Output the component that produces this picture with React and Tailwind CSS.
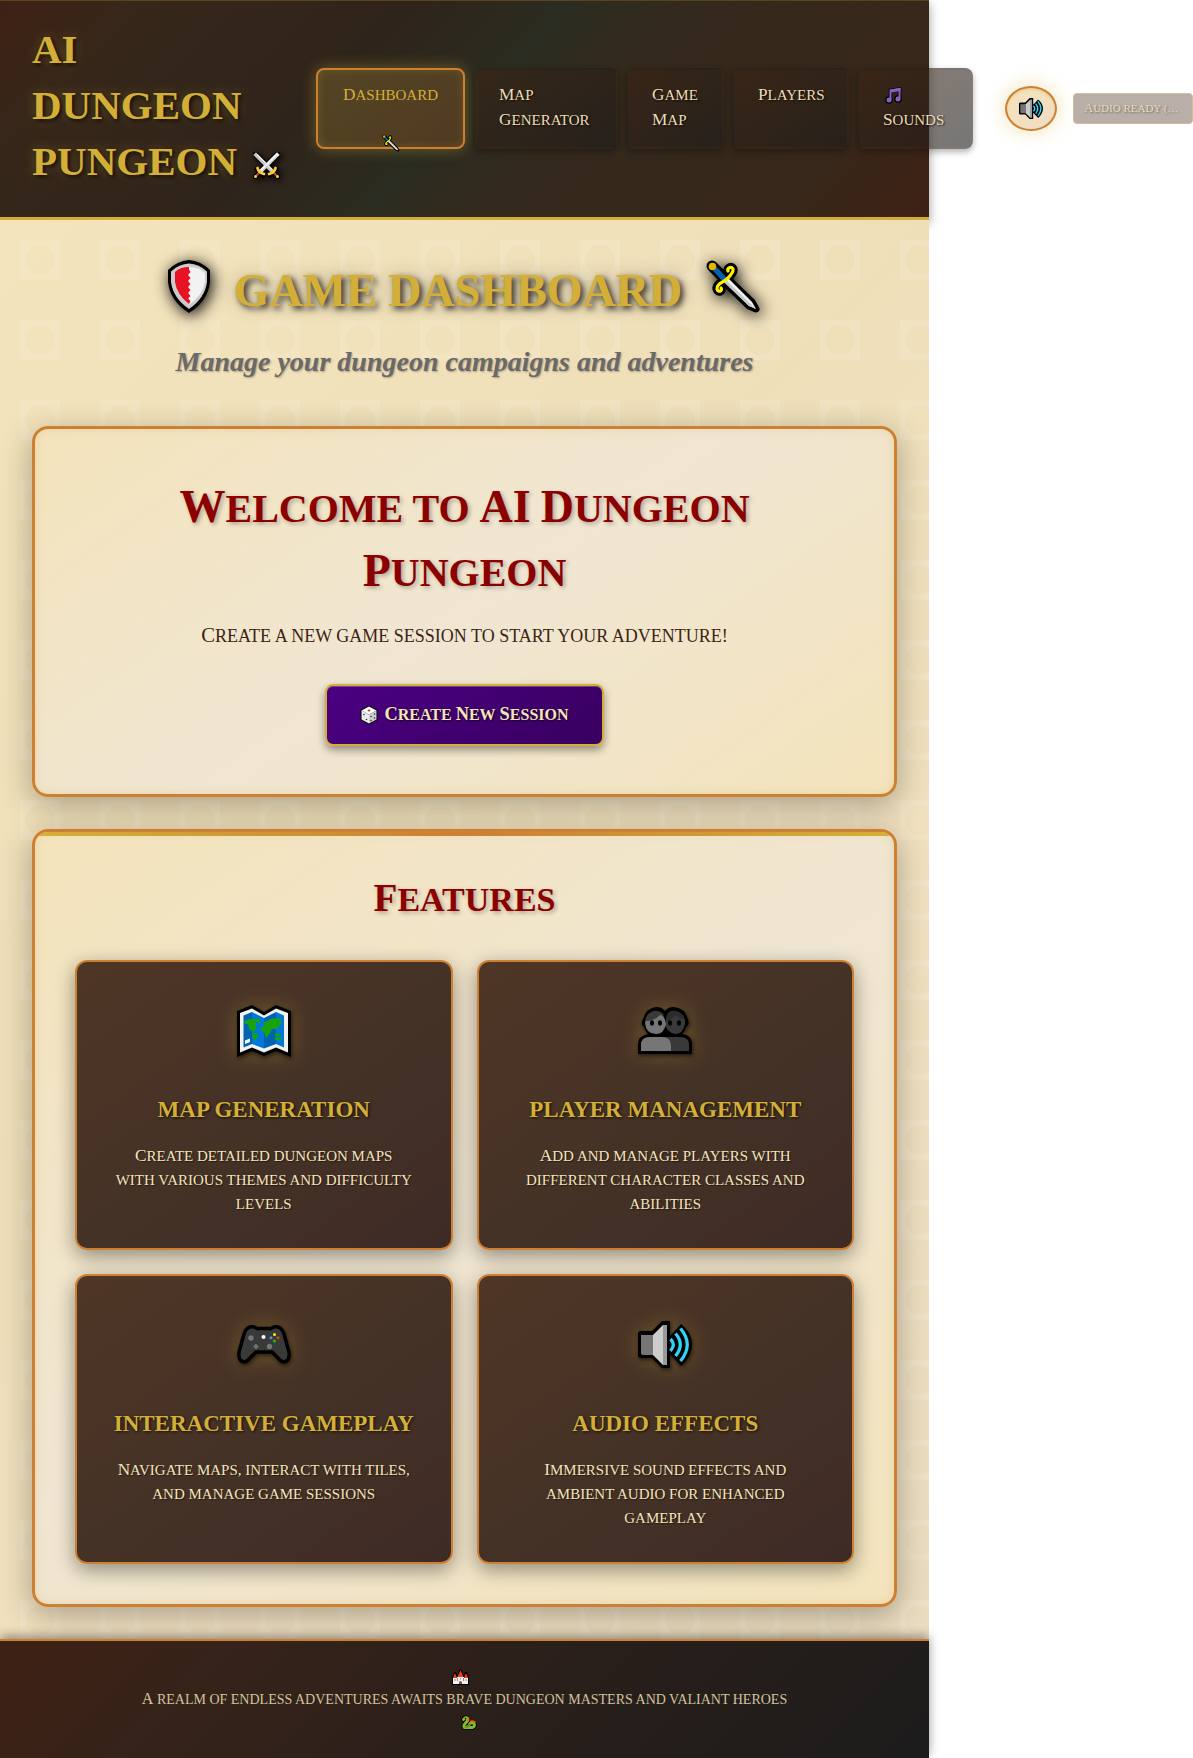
import React from "react";

/* Engraved capitals: capitalised words open with a slightly larger letter. */
function Caps({ children }) {
  const words = children.split(" ");
  return words.map((word, i) => {
    const gap = i < words.length - 1 ? " " : "";
    if (/^[A-Z]+$/.test(word)) {
      return (
        <React.Fragment key={i}>
          <span className="text-[1.15em] leading-none">{word}</span>
          {gap}
        </React.Fragment>
      );
    }
    if (/^[A-Z]/.test(word)) {
      return (
        <React.Fragment key={i}>
          <span className="inline-block leading-none first-letter:text-[1.15em]">{word}</span>
          {gap}
        </React.Fragment>
      );
    }
    return word + gap;
  });
}

function SwordsIcon({ className }) {
  return (
    <svg viewBox="0 0 27 27" className={className} aria-hidden="true">
      <g strokeLinecap="square">
        <path d="M2 2 L20 20 M25 2 L7 20" stroke="#000" strokeWidth="6" />
        <path d="M4 17 L10 23 M23 17 L17 23" stroke="#000" strokeWidth="4.5" />
        <path d="M7 20 L2 25 M20 20 L25 25" stroke="#000" strokeWidth="4.5" />
        <path d="M3 3 L19 19" stroke="#c4c4c4" strokeWidth="3.8" />
        <path d="M24 3 L8 19" stroke="#efefef" strokeWidth="3.8" />
        <path d="M24 4.500 L9.500 19" stroke="#b4b4b4" strokeWidth="1" />
        <path d="M4.500 3 L19 17.500" stroke="#ececec" strokeWidth="1.2" />
        <path d="M7 20 L3 24 M20 20 L24 24" stroke="#8e562e" strokeWidth="2.4" />
      </g>
      <path d="M4.500 16 Q5.500 20.500 11 22 M22.500 16 Q21.500 20.500 16 22" fill="none" stroke="#ffc83d" strokeWidth="2.8" strokeLinecap="round" />
      <circle cx="2.500" cy="24.500" r="1.500" fill="#ffc83d" />
      <circle cx="24.500" cy="24.500" r="1.500" fill="#ffc83d" />
    </svg>
  );
}

function DaggerIcon({ className }) {
  const guard = "M22 11 C21 8 25 6 27 9 C28 12 24 16 21 19 C18 22 10 24 11 29 C12 33 17 31 15 28";
  return (
    <svg viewBox="0 0 55 53" className={className} aria-hidden="true">
      <g fill="none" stroke="#000" strokeLinecap="round" strokeLinejoin="round">
        <path d="M6 6 L20 20" strokeWidth="11" />
        <path d={guard} strokeWidth="9" />
        <path d="M19 23 L22 19 L46 42 L50 49 L43 46 Z" fill="#000" strokeWidth="7" />
      </g>
      <path d="M9 9 L19 20" stroke="#0063b1" strokeWidth="5.5" />
      <circle cx="6.500" cy="6.500" r="3.800" fill="#dfb700" />
      <path d="M18 22 L22 18 L46 42 L50 49 L43 46 Z" fill="#f2f2f2" />
      <path d="M18 22 L20 20 L50 49 L43 46 Z" fill="#c8c8c8" />
      <path d={guard} fill="none" stroke="#fff100" strokeWidth="3.2" strokeLinecap="round" />
    </svg>
  );
}

function ShieldIcon({ className }) {
  return (
    <svg viewBox="0 0 42 53" className={className} aria-hidden="true">
      <path d="M21 0 Q33 1 42 10 V22 Q40 41 21 53 Q2 41 0 22 V10 Q9 1 21 0 Z" fill="#000" />
      <path d="M21 3.500 Q31 4 39 11.500 V22 Q37 38 21 49 Q5 38 3 22 V11.500 Q11 4 21 3.500 Z" fill="#cccccc" />
      <path d="M20 7 Q30 6 37 13 V22 Q35 35 21 45 Z" fill="#f2f2f2" />
      <path d="M21 7 Q12 7 7 12 V22 Q9 35 21 44 L22.500 41 L20 38.500 L22.500 36 L20 33 L22.500 30 L20 27 L22.500 24 L20 21 L22.500 18 L20 15 L22.500 12 L21 9.500 Z" fill="#e81224" />
    </svg>
  );
}

function MusicIcon({ className }) {
  const body = "M5.500 14 V4.500 L14.500 3 V12.500";
  return (
    <svg viewBox="0 0 17 18" className={className} aria-hidden="true">
      <g stroke="#000" strokeWidth="3.600" fill="#000">
        <path d={body} fill="none" />
        <circle cx="4" cy="14" r="2" />
        <circle cx="13" cy="13" r="2" />
      </g>
      <path d={body} fill="none" stroke="#8661c5" strokeWidth="2" />
      <path d="M5 3.500 L15.500 2 V5 L5 6.500 Z" fill="#8661c5" />
      <circle cx="4" cy="14" r="2.500" fill="#8661c5" />
      <circle cx="13" cy="13" r="2.500" fill="#8661c5" />
    </svg>
  );
}

function SpeakerIcon({ className }) {
  return (
    <svg viewBox="0 0 54 47" className={className} aria-hidden="true">
      <path d="M3 10 H14 L24 0 H32 V15 L43 3 Q54 12 54 23.500 Q54 35 43 45 L32 33 V47 H24 L14 37 H3 Q0 37 0 34 V13 Q0 10 3 10 Z" fill="#000" />
      <path d="M3 14 H15 V34 H5 Q3 34 3 32 Z" fill="#767676" />
      <path d="M15 14 L25 4 H29 V44 H25 L15 34 Z" fill="#cccccc" />
      <path d="M25 4 H29 V44 H25 Z" fill="#999999" />
      <g fill="none" stroke="#31d2f7" strokeWidth="3.2">
        <path d="M32.500 18 Q38 23.500 32.500 30" />
        <path d="M37.500 12.500 Q47 23.500 37.500 35" />
        <path d="M42.500 7.500 Q56 23.500 42.500 40" />
      </g>
    </svg>
  );
}

function DiceIcon({ className }) {
  return (
    <svg viewBox="0 0 18 20" className={className} aria-hidden="true">
      <path d="M9 0.500 L17.500 5 V15 L9 19.500 L0.500 15 V5 Z" fill="#000" />
      <path d="M9 1.500 L16.500 5.500 L9 9.500 L1.500 5.500 Z" fill="#fff" />
      <path d="M1.500 5.500 L9 9.500 V18.500 L1.500 14.500 Z" fill="#eaeaea" />
      <path d="M16.500 5.500 L9 9.500 V18.500 L16.500 14.500 Z" fill="#d0d0d0" />
      <ellipse cx="9" cy="5.500" rx="1.400" ry="0.900" fill="#d13438" />
      <g fill="#333">
        <circle cx="4" cy="9.500" r="0.800" />
        <circle cx="6.500" cy="14.500" r="0.800" />
        <circle cx="11" cy="15.500" r="0.800" />
        <circle cx="11" cy="11.500" r="0.800" />
        <circle cx="14.500" cy="13" r="0.800" />
        <circle cx="14.500" cy="9" r="0.800" />
      </g>
    </svg>
  );
}

function MapIcon({ className }) {
  return (
    <svg viewBox="0 0 54 52" className={className} aria-hidden="true">
      <path d="M0 6 L15 0 L27 7 L39 0 L54 6 V52 L39 46 L27 51 L15 46 L0 52 Z" fill="#000" />
      <path d="M3 8 L15 3.500 L27 10.500 L39 3.500 L51 8 V47.500 L39 42.500 L27 47.500 L15 42.500 L3 47.500 Z" fill="#f2f2f2" />
      <path d="M6.500 10.500 L15 7 V39 L6.500 42.500 Z M27 13 L39 7 V39 L27 43.500 Z" fill="#0063b1" />
      <path d="M15 7 L27 13 V43.500 L15 39 Z M39 7 L47 10.500 V42.500 L39 39 Z" fill="#0078d7" />
      <path d="M7 16 L13 14 L23 14 L22 19 L18 21 L20 23 L16 27 L12 24 L11 19 L8 19 Z M15 28 L20 28 L21 31 L18 36 L16 33 Z M26 18 L32 15 L37 13 L44 14 L44 19 L40 24 L35 24 L33 28 L29 33 L27 27 L24 26 L24 23 L27 21 Z M38 28 L43 29 V31 H38 Z M38 32 H44 V35 H38 Z" fill="#16a30f" />
      <path d="M19 17 h2 v3 h-2 z" fill="#0078d7" />
      <path d="M8 35.500 L13 33.500 V37 L8 39 Z" fill="#fff" />
    </svg>
  );
}

function PlayersIcon({ className }) {
  return (
    <svg viewBox="0 0 54 47" className={className} aria-hidden="true">
      <path d="M18 0 Q24 0 27 4 Q30 0 36 0 Q47 1 50 12 Q52 17 48 20 Q47 24 44 27 Q54 28 54 37 V47 H0 V37 Q0 29 10 27 Q7 24 6 20 Q2 17 5 12 Q8 1 18 0 Z" fill="#000" />
      <path d="M29 8 Q32 3 37 4 Q45 5 47 13 L47 17 Q45 27 37 27 Q30 26 27 18 Z" fill="#393939" />
      <path d="M29 8 Q32 3 37 4 Q44 5 46 12 Q40 11 38 8 Q33 13 28 14 Z" fill="#2b2b2b" />
      <path d="M7 16 Q8 27 18 27 Q26 27 28 17 Q26 5 17 4 Q9 5 7 16 Z" fill="#767676" />
      <path d="M7 14 Q9 4 18 4 Q23 4 26 8 Q24 9 22 8 Q16 14 7 14 Z" fill="#393939" />
      <g fill="#000">
        <ellipse cx="14" cy="16" rx="2" ry="2.800" />
        <ellipse cx="22" cy="16" rx="2" ry="2.800" />
        <ellipse cx="32" cy="16" rx="2" ry="2.800" />
        <ellipse cx="41" cy="16" rx="2" ry="2.800" />
      </g>
      <path d="M3 44 V38 Q3 30 12 30 H42 Q51 30 51 38 V44 Z" fill="#393939" />
      <path d="M3 44 V38 Q3 30 12 30 H24 Q33 30 33 39 V44 Z" fill="#767676" />
    </svg>
  );
}

function GamepadIcon({ className }) {
  const body = "M13 2 Q17 1 20 3.500 H34 Q37 1 41 2 Q45 3 47 9 L52 27 Q53 36 47 37 Q44 37 41 33 L35 27 H19 L13 33 Q10 37 7 37 Q1 36 2 27 L7 9 Q9 3 13 2 Z";
  return (
    <svg viewBox="0 0 54 39" className={className} aria-hidden="true">
      <path d={body} fill="#393939" stroke="#000" strokeWidth="3.500" />
      <circle cx="14" cy="13" r="2.700" fill="#767676" />
      <circle cx="32.500" cy="21.500" r="2.700" fill="#767676" />
      <path d="M19 19 V24 M16.500 21.500 H21.500" stroke="#767676" strokeWidth="1.800" />
      <circle cx="26.500" cy="12" r="2" fill="#fff" />
      <circle cx="37.500" cy="9.500" r="1.500" fill="#fff100" />
      <circle cx="34" cy="12.800" r="1.500" fill="#4a90e2" />
      <circle cx="41" cy="12.800" r="1.500" fill="#f03a17" />
      <circle cx="37.500" cy="16" r="1.500" fill="#16c60c" />
    </svg>
  );
}

function CastleIcon({ className }) {
  return (
    <svg viewBox="0 0 17 16" className={className} aria-hidden="true">
      <path d="M0 16 V8 L2 3 H4 L5.500 6 L7 1.500 L8.500 0 L10 1.500 L11.500 6 L13 3 H15 L17 8 V16 Z" fill="#000" />
      <path d="M1 15 V9 H5 V8 H12 V9 H16 V15 Z" fill="#f2f2f2" />
      <path d="M1 9 L3 4 L5 9 Z M12 9 L14 4 L16 9 Z M5.500 8 L8.500 1 L11.500 8 Z" fill="#f03a17" />
      <path d="M5.500 9 V12 M11.500 9 V12 M3 10 V12 M14 10 V12 M8.500 9 V10.500" stroke="#8a8a8a" strokeWidth="1" />
      <path d="M7 15 V13 Q8.500 11 10 13 V15 Z" fill="#8e562e" />
    </svg>
  );
}

function SnakeIcon({ className }) {
  const body = "M2.500 4.500 Q5 1 6.500 4 Q7 6 4.500 8 Q2 10.500 3.500 12.500 H11.500 Q14.500 11 13 8.500 Q11 7 9 8.500";
  return (
    <svg viewBox="0 0 16 15" className={className} aria-hidden="true">
      <path d={body} fill="#000" stroke="#000" strokeWidth="4.6" strokeLinecap="round" strokeLinejoin="round" />
      <path d={body} fill="none" stroke="#86b82a" strokeWidth="3" strokeLinecap="round" strokeLinejoin="round" />
      <path d="M4 12 Q8 12 9 8.500" fill="none" stroke="#6b9a1e" strokeWidth="2.600" />
      <path d="M7 2.500 Q8.500 4 7 6.500 M9 6.500 Q12 5 14.500 7.500" fill="none" stroke="#f7630c" strokeWidth="1.500" />
      <circle cx="4.500" cy="3.500" r="0.700" fill="#000" />
    </svg>
  );
}

const navItems = [
  { label: "Map Generator", width: "w-[145px]" },
  { label: "Game Map", width: "w-[98px]" },
  { label: "Players", width: "w-[117px]" },
  { label: "Sounds", width: "w-[116px]", music: true },
];

const features = [
  {
    title: "Map Generation",
    lines: ["Create detailed dungeon maps", "with various themes and difficulty levels"],
    Icon: MapIcon,
    size: "w-[54px] h-[52px]",
  },
  {
    title: "Player Management",
    lines: ["Add and manage players with", "different character classes and abilities"],
    Icon: PlayersIcon,
    size: "w-[54px] h-[47px]",
  },
  {
    title: "Interactive Gameplay",
    lines: ["Navigate maps, interact with tiles,", "and manage game sessions"],
    Icon: GamepadIcon,
    size: "w-[54px] h-[39px]",
  },
  {
    title: "Audio Effects",
    lines: ["Immersive sound effects and", "ambient audio for enhanced gameplay"],
    Icon: SpeakerIcon,
    size: "w-[54px] h-[47px]",
  },
];

function Header() {
  return (
    <header className="flex items-center gap-8 border-t border-b-3 border-t-[#5a431f] border-b-[#d4af37] bg-[linear-gradient(135deg,#3f2114_0%,#37271a_12%,#2f241b_36%,#2b2c21_50%,#33291c_60%,#37271a_86%,#3f2114_100%)] bg-origin-border px-8 pt-5 pb-7 shadow-[0_4px_10px_rgba(0,0,0,0.4)]">
      <h1 className="w-[252px] shrink-0 text-[41px] leading-[56px] font-bold uppercase text-[#d4af37] [text-shadow:2px_2px_4px_rgba(0,0,0,0.8),0_0_12px_rgba(212,175,55,0.3)]">
        AI
        <br />
        Dungeon
        <br />
        <span className="flex items-center gap-4">
          Pungeon
          <SwordsIcon className="mt-2 h-[27px] w-[27px] shrink-0 drop-shadow-[2px_2px_3px_rgba(0,0,0,0.9)]" />
        </span>
      </h1>
      <div className="flex shrink-0 items-center gap-8 pt-[6px]">
        <nav className="flex shrink-0 gap-2 text-[15px] leading-[25px] uppercase">
          <a
            href="#dashboard"
            aria-current="page"
            className="relative w-[149px] rounded-lg border-2 border-[#cd7f32] bg-[linear-gradient(145deg,#544524,#503a22)] px-[25px] pt-[13px] pb-[14px] text-[#d4af37] shadow-[0_0_15px_rgba(212,175,55,0.4),inset_0_0_10px_rgba(212,175,55,0.2)]"
          >
            <Caps>Dashboard</Caps>
            <DaggerIcon className="absolute -bottom-[5px] left-1/2 h-[18px] w-[18px] -translate-x-1/2" />
          </a>
          {navItems.map(({ label, width, music }) => (
            <a
              key={label}
              href={"#" + label.toLowerCase().replace(" ", "-")}
              className={
                width +
                " shrink-0 rounded-lg border-2 border-transparent bg-[linear-gradient(145deg,rgba(60,36,21,0.6),rgba(28,28,28,0.6))] pt-[13px] pr-4 pb-[14px] pl-6 text-[#ecdcb4] shadow-[0_3px_6px_rgba(0,0,0,0.3)] [text-shadow:1px_1px_2px_rgba(0,0,0,0.8)]"
              }
            >
              {music ? (
                <>
                  <span className="flex h-[25px] items-center pl-[2px]">
                    <MusicIcon className="h-[18px] w-[17px]" />
                  </span>
                  <Caps>{label}</Caps>
                </>
              ) : (
                <Caps>{label}</Caps>
              )}
            </a>
          ))}
        </nav>
        <div className="flex shrink-0 items-center gap-4">
          <button
            type="button"
            aria-label="Toggle audio"
            className="flex h-[45px] w-[52px] items-center justify-center rounded-[50%] border-2 border-[#cd7f32] bg-[linear-gradient(145deg,#f4e4bc,#f0dcc4)] shadow-[0_0_20px_rgba(212,175,55,0.4),inset_0_2px_2px_rgba(212,175,55,0.3)]"
          >
            <SpeakerIcon className="h-[21px] w-[24px]" />
          </button>
          <span className="w-[120px] rounded border border-[#cfc09c] bg-[#b9aea8] px-[10px] text-[11px] leading-[29px] whitespace-nowrap uppercase text-[#e9dcb8] [text-shadow:1px_1px_2px_rgba(0,0,0,0.4)]">
            <Caps>Audio ready (…</Caps>
          </span>
        </div>
      </div>
    </header>
  );
}

const panel =
  "relative overflow-hidden rounded-[16px] border-3 border-[#cd7f32] bg-[linear-gradient(145deg,#f4e4bc_0%,#f0e6d2_50%,#f4e4bc_100%)] text-center shadow-[0_8px_32px_rgba(0,0,0,0.3),inset_0_0_10px_rgba(205,160,80,0.25)]";

export default function App() {
  return (
    <div className="min-h-screen bg-white font-['Liberation_Serif',serif]">
      <div className="mr-[264px]">
        <Header />

        <main className="relative bg-[linear-gradient(135deg,#f4e4bc_0%,#efdfb9_40%,#f0e0c0_70%,#eadcbf_100%)] p-8">
          <svg className="absolute inset-0 h-full w-full" aria-hidden="true">
            <defs>
              <pattern id="tiles" width="80" height="80" patternUnits="userSpaceOnUse">
                <path
                  d="M20 20 H60 V60 H20 Z M40 25 A15 15 0 1 0 40 55 A15 15 0 1 0 40 25 Z"
                  fill="#fff"
                  fillOpacity="0.11"
                  fillRule="evenodd"
                />
              </pattern>
            </defs>
            <rect width="100%" height="100%" fill="url(#tiles)" />
          </svg>

          <div className="relative">
            <div className="mb-12 text-center">
              <h2 className="mb-4 flex h-[77px] items-center justify-center gap-6 text-[46px] font-bold uppercase text-[#d4af37] [text-shadow:3px_3px_6px_rgba(0,0,0,0.8),0_0_20px_rgba(0,0,0,0.3)]">
                <ShieldIcon className="mb-2 h-[53px] w-[42px] drop-shadow-[2px_3px_8px_rgba(0,0,0,1)]" />
                <span>Game Dashboard</span>
                <DaggerIcon className="mb-2 h-[53px] w-[55px] drop-shadow-[2px_3px_8px_rgba(0,0,0,1)]" />
              </h2>
              <p className="text-[28px] leading-[33px] font-bold italic text-[#696969] [text-shadow:1px_1px_2px_rgba(0,0,0,0.3)]">
                Manage your dungeon campaigns and adventures
              </p>
            </div>

            <section className={panel + " mb-8 p-12"}>
              <h2 className="mx-auto mb-4 max-w-[620px] text-[40px] leading-[64px] font-bold uppercase text-[#8b0000] [text-shadow:2px_2px_4px_rgba(0,0,0,0.3)]">
                <Caps>Welcome to AI Dungeon Pungeon</Caps>
              </h2>
              <p className="mb-8 text-[18px] leading-[31px] uppercase text-[#3c2415]">
                <Caps>Create a new game session to start your adventure!</Caps>
              </p>
              <button
                type="button"
                className="inline-flex h-[62px] w-[279px] items-center justify-center gap-[6px] rounded-lg border-2 border-[#d4af37] bg-[linear-gradient(145deg,#4b0082,#380060)] align-top text-[16px] font-bold uppercase text-[#f4e4bc] shadow-[0_4px_8px_rgba(0,0,0,0.4),inset_0_1px_0_rgba(255,255,255,0.25)] [text-shadow:1px_1px_2px_rgba(0,0,0,0.8)]"
              >
                <DiceIcon className="h-[20px] w-[18px]" />
                <span>
                  <Caps>Create New Session</Caps>
                </span>
              </button>
            </section>

            <section className={panel + " p-10"}>
              <div className="absolute inset-x-0 top-0 h-1 bg-[linear-gradient(90deg,#d4af37,#cd7f32,#d4af37)]" />
              <h2 className="mb-8 text-[34px] leading-[56px] font-bold uppercase text-[#8b0000] [text-shadow:2px_2px_4px_rgba(0,0,0,0.3)]">
                <Caps>Features</Caps>
              </h2>
              <div className="grid grid-cols-2 gap-6">
                {features.map(({ title, lines, Icon, size }) => (
                  <article
                    key={title}
                    className="rounded-xl border-2 border-[#cd7f32] bg-[linear-gradient(145deg,#4f3626_0%,#453226_50%,#3f2b26_100%)] p-8 shadow-[0_6px_20px_rgba(0,0,0,0.4)]"
                  >
                    <div className="mb-5 flex h-[73px] items-center justify-center">
                      <Icon className={size + " [filter:drop-shadow(1px_2px_2px_rgba(0,0,0,0.6))_drop-shadow(0_0_10px_rgba(212,175,55,0.3))]"} />
                    </div>
                    <h3 className="mb-3 text-[23px] leading-[45px] font-bold uppercase text-[#d4af37] [text-shadow:1px_1px_3px_rgba(0,0,0,0.8)]">
                      {title}
                    </h3>
                    <p className="min-h-[72px] text-[15px] leading-6 uppercase text-[#f4e4bc] [text-shadow:1px_1px_1px_rgba(0,0,0,0.5)]">
                      <Caps>{lines[0]}</Caps>
                      <br />
                      {lines[1]}
                    </p>
                  </article>
                ))}
              </div>
            </section>
          </div>
        </main>

        <footer className="relative flex flex-col items-center border-t-2 border-[#cd7f32] bg-[linear-gradient(135deg,#3f2114_0%,#35231a_25%,#2a1f1a_55%,#1c1c1c_100%)] py-6 text-[14px] leading-[23px] uppercase text-[#d2c29d] shadow-[0_-3px_10px_rgba(0,0,0,0.4)]">
          <span className="flex h-[23px] items-center pr-2">
            <CastleIcon className="h-[16px] w-[17px]" />
          </span>
          <p>
            <Caps>A realm of endless adventures awaits brave dungeon masters and valiant heroes</Caps>
          </p>
          <span className="flex h-[23px] items-center pl-2">
            <SnakeIcon className="h-[15px] w-[16px]" />
          </span>
        </footer>
      </div>
    </div>
  );
}
